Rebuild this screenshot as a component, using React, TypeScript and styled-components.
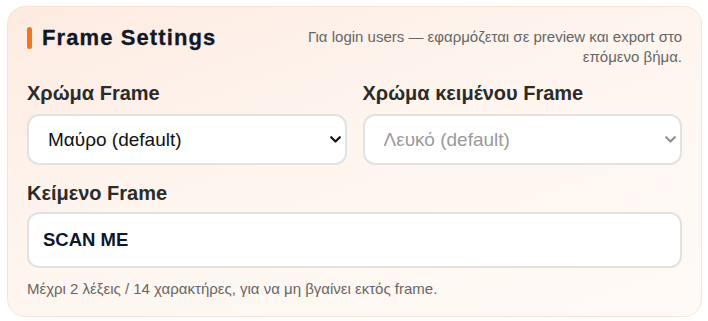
import React, { useState } from 'react';
import styled, { createGlobalStyle } from 'styled-components';

const GlobalStyle = createGlobalStyle`
  html, body {
    margin: 0;
    padding: 0;
    background: #ffffff;
    font-family: "Liberation Sans", Arial, sans-serif;
  }
`;

const Page = styled.div`
  padding: 6px 6px 4px 7px;
`;

const Card = styled.section`
  width: 695px;
  box-sizing: border-box;
  padding: 20px 19px 17px 19px;
  border: 1px solid #fbe2d2;
  border-radius: 18px;
  background: linear-gradient(160deg, #fdebe1 0%, #fef5ef 45%, #fffaf6 100%);
`;

const Header = styled.header`
  display: flex;
  justify-content: space-between;
  align-items: flex-start;
`;

const TitleWrap = styled.div`
  display: flex;
  align-items: center;
  gap: 10px;
`;

const Accent = styled.span`
  display: block;
  width: 5px;
  height: 22px;
  border-radius: 3px;
  background: #f07626;
`;

const Title = styled.h2`
  margin: 0;
  font-size: 22px;
  line-height: 22px;
  font-weight: 700;
  letter-spacing: 1.1px;
  color: #111827;
  -webkit-text-stroke: 0.3px #111827;
`;

const Note = styled.p`
  margin: 0;
  max-width: 390px;
  font-size: 15px;
  line-height: 20px;
  color: #666666;
  text-align: right;
`;

const Grid = styled.div`
  display: grid;
  grid-template-columns: 1fr 1fr;
  gap: 16px;
  margin-top: 15px;
`;

const Field = styled.div<{ $top?: number }>`
  display: flex;
  flex-direction: column;
  margin-top: ${(p) => p.$top ?? 0}px;
`;

const Label = styled.label<{ $gap: number }>`
  display: block;
  font-size: 20px;
  line-height: 23px;
  font-weight: 700;
  color: #2b2b2b;
  margin-bottom: ${(p) => p.$gap}px;
`;

const SelectBox = styled.div`
  position: relative;
`;

const Select = styled.select<{ $muted?: boolean }>`
  appearance: none;
  -webkit-appearance: none;
  width: 100%;
  height: 51px;
  box-sizing: border-box;
  padding: 0 36px 0 19px;
  border: 2px solid #e2e2e2;
  border-radius: 12px;
  background: #ffffff;
  font-family: "Liberation Sans", Arial, sans-serif;
  font-size: 19px;
  color: ${(p) => (p.$muted ? '#9a9a9a' : '#111111')};
  opacity: 1;
  outline: none;
`;

const Chevron = styled.svg<{ $muted?: boolean }>`
  position: absolute;
  right: 6px;
  top: 22px;
  width: 11px;
  height: 7px;
  pointer-events: none;
  color: ${(p) => (p.$muted ? '#8f8f8f' : '#111111')};
`;

const TextInput = styled.input`
  width: 100%;
  height: 56px;
  box-sizing: border-box;
  padding: 0 14px;
  border: 2px solid #e2e2e2;
  border-radius: 12px;
  background: #ffffff;
  font-family: "Liberation Sans", Arial, sans-serif;
  font-size: 18.5px;
  font-weight: 700;
  color: #0f172a;
  outline: none;
`;

const Hint = styled.p`
  margin: 11px 0 0;
  font-size: 15px;
  line-height: 20px;
  color: #666666;
`;

const ChevronIcon: React.FC<{ muted?: boolean }> = ({ muted }) => (
  <Chevron $muted={muted} viewBox="0 0 11 7" fill="none">
    <path d="M1.2 1.2 L5.5 5.5 L9.8 1.2" stroke="currentColor" strokeWidth="2.2" strokeLinecap="round" strokeLinejoin="round" />
  </Chevron>
);

export default function App() {
  const [frameColor, setFrameColor] = useState('black');
  const [frameText, setFrameText] = useState('SCAN ME');

  return (
    <Page>
      <GlobalStyle />
      <Card>
        <Header>
          <TitleWrap>
            <Accent />
            <Title>Frame Settings</Title>
          </TitleWrap>
          <Note>Για login users — εφαρμόζεται σε preview και export στο επόμενο βήμα.</Note>
        </Header>

        <Grid>
          <Field>
            <Label $gap={9}>Χρώμα Frame</Label>
            <SelectBox>
              <Select value={frameColor} onChange={(e) => setFrameColor(e.target.value)}>
                <option value="black">Μαύρο (default)</option>
                <option value="white">Λευκό</option>
              </Select>
              <ChevronIcon />
            </SelectBox>
          </Field>
          <Field>
            <Label $gap={9}>Χρώμα κειμένου Frame</Label>
            <SelectBox>
              <Select $muted disabled value="white" onChange={() => undefined}>
                <option value="white">Λευκό (default)</option>
              </Select>
              <ChevronIcon muted />
            </SelectBox>
          </Field>
        </Grid>

        <Field $top={17}>
          <Label $gap={7}>Κείμενο Frame</Label>
          <TextInput value={frameText} onChange={(e) => setFrameText(e.target.value)} />
          <Hint>Μέχρι 2 λέξεις / 14 χαρακτήρες, για να μη βγαίνει εκτός frame.</Hint>
        </Field>
      </Card>
    </Page>
  );
}
